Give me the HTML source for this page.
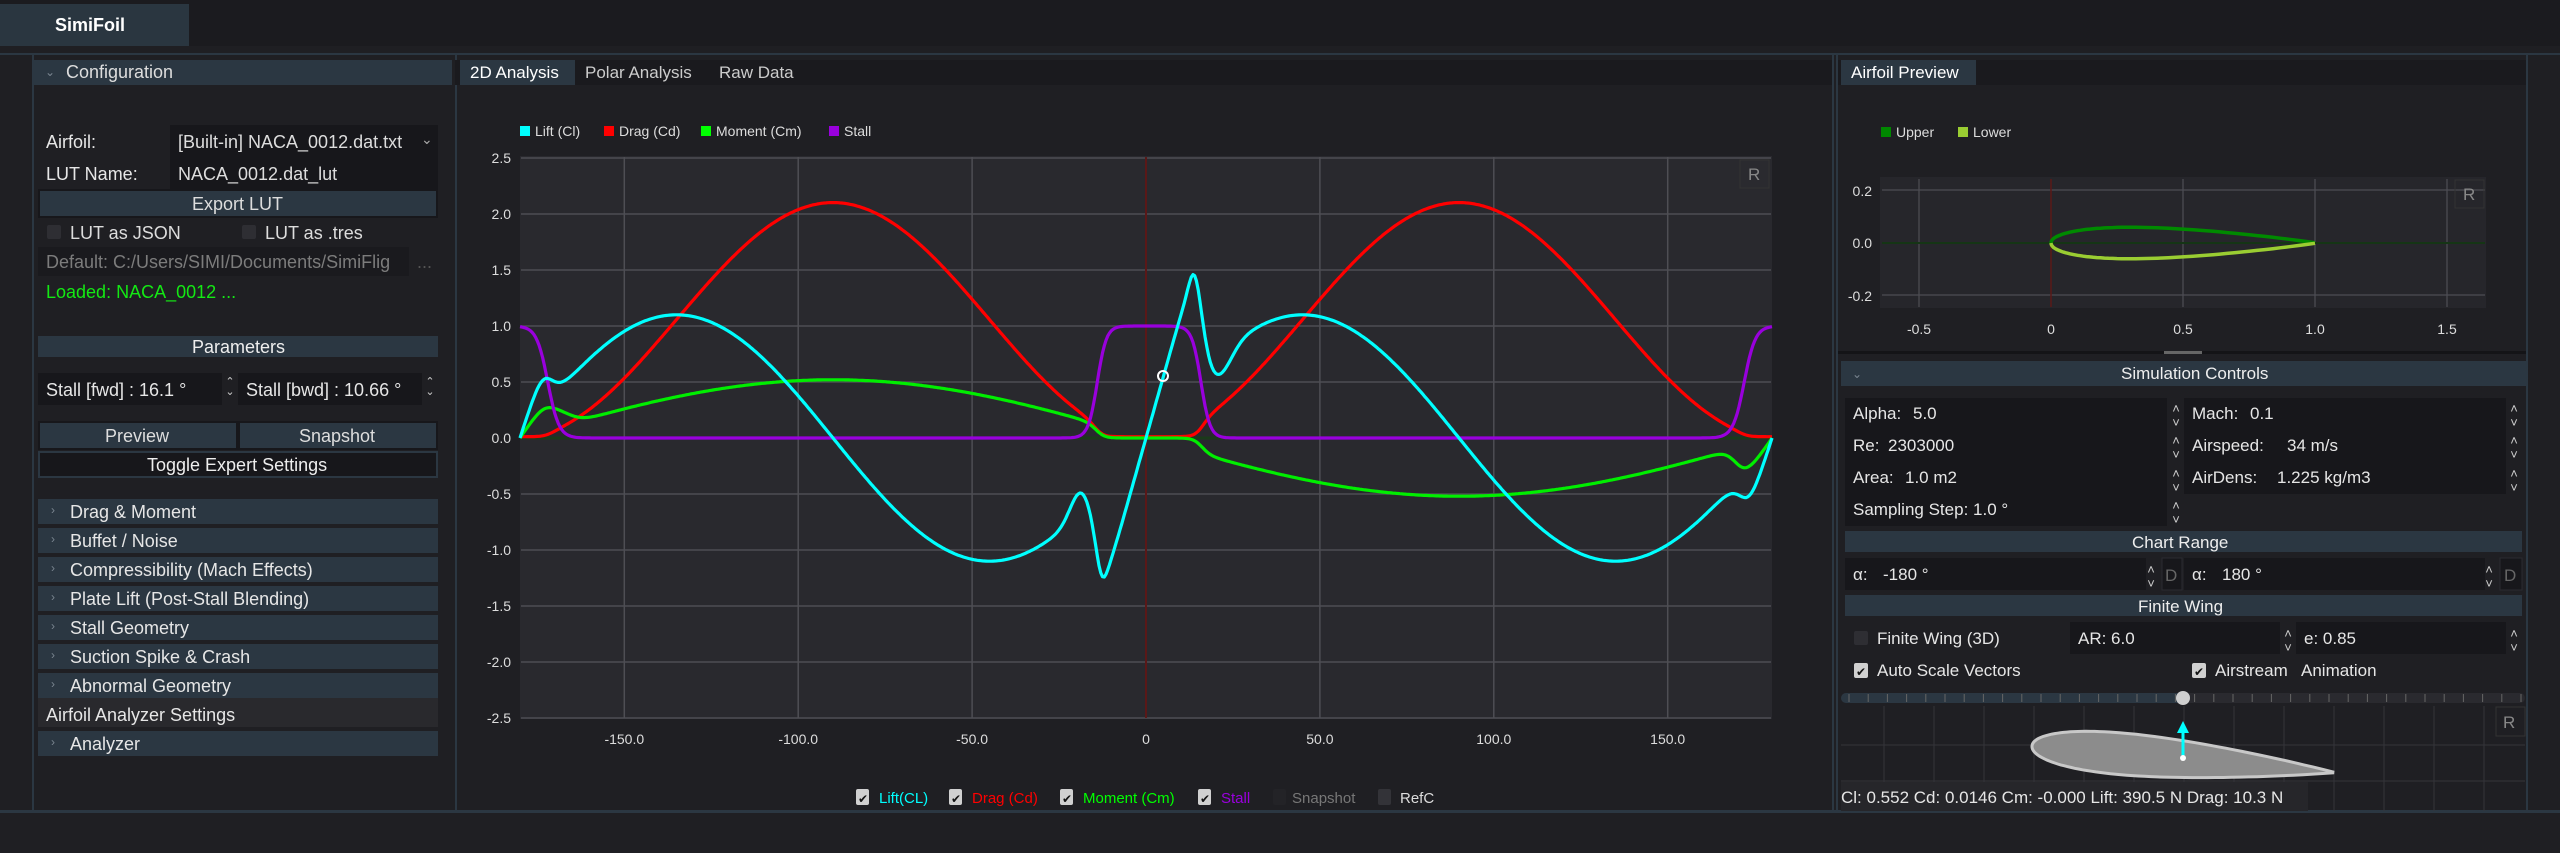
<!DOCTYPE html>
<html><head><meta charset="utf-8">
<style>
*{margin:0;padding:0;box-sizing:border-box}
body{width:2560px;height:853px;background:#1f1f23;font-family:"Liberation Sans",sans-serif;color:#e6e6e6;position:relative;overflow:hidden}
.a{position:absolute;white-space:nowrap}
.hdr{position:absolute;background:#2b3742}
.inp{position:absolute;background:#17171b}
.t{position:absolute;white-space:nowrap;font-size:18px;line-height:1}
.r{font-size:17px}
.chev{position:absolute;color:#7a8590;font-size:12px}
.cb{position:absolute;width:14px;height:14px;background:#2e2e33;border-radius:2px}
.spin{position:absolute;color:#ccc;font-size:11px;line-height:10px;text-align:center;width:12px}
svg text{white-space:pre}
</style></head><body>
<div class="a" style="left:0;top:0;width:2560px;height:46px;background:#1b1b1f"></div>
<div class="a" style="left:0;top:4px;width:189px;height:42px;background:#2a3640"></div>
<div class="t" style="left:55px;top:16px;font-weight:bold;font-size:18px;color:#fff">SimiFoil</div>
<div class="a" style="left:0;top:53px;width:2560px;height:2px;background:#2b3742"></div>
<div class="a" style="left:0;top:810px;width:2560px;height:3px;background:#2b3742"></div>

<div class="a" style="left:32px;top:55px;width:2px;height:756px;background:#2b3742"></div>
<div class="a" style="left:455px;top:55px;width:2px;height:756px;background:#2b3742"></div>
<div class="hdr" style="left:34px;top:60px;width:418px;height:25px"></div>
<div class="chev" style="left:45px;top:65px">&#8964;</div>
<div class="t" style="left:66px;top:63px;color:#ddd">Configuration</div>
<div class="t" style="left:46px;top:133px">Airfoil:</div>
<div class="t" style="left:46px;top:165px">LUT Name:</div>
<div class="inp" style="left:170px;top:125px;width:268px;height:64px"></div>
<div class="t" style="left:178px;top:133px;color:#ddd">[Built-in] NACA_0012.dat.txt</div>
<div class="a" style="left:421px;top:131px;color:#aaa;font-size:14px">&#8964;</div>
<div class="t" style="left:178px;top:165px;color:#ddd">NACA_0012.dat_lut</div>
<div class="a" style="left:38px;top:189px;width:400px;height:29px;background:#17171b"></div>
<div class="hdr" style="left:40px;top:191px;width:396px;height:25px"></div>
<div class="t" style="left:192px;top:195px;color:#ddd">Export LUT</div>
<div class="cb" style="left:47px;top:225px"></div>
<div class="t" style="left:70px;top:224px;color:#ddd">LUT as JSON</div>
<div class="cb" style="left:242px;top:225px"></div>
<div class="t" style="left:265px;top:224px;color:#ddd">LUT as .tres</div>
<div class="inp" style="left:38px;top:247px;width:371px;height:29px;background:#1a1a1e"></div>
<div class="t" style="left:46px;top:253px;color:#7c7c7c">Default: C:/Users/SIMI/Documents/SimiFlig</div>
<div class="t" style="left:417px;top:253px;color:#555">...</div>
<div class="t" style="left:46px;top:283px;color:#14e814">Loaded: NACA_0012 ...</div>
<div class="hdr" style="left:38px;top:336px;width:400px;height:21px"></div>
<div class="t" style="left:192px;top:338px;color:#eee">Parameters</div>
<div class="inp" style="left:38px;top:373px;width:184px;height:32px"></div>
<div class="t" style="left:46px;top:381px">Stall [fwd] : 16.1 °</div>
<div class="spin" style="left:224px;top:377px">&#8963;<br>&#8964;</div>
<div class="inp" style="left:238px;top:373px;width:184px;height:32px"></div>
<div class="t" style="left:246px;top:381px">Stall [bwd] : 10.66 °</div>
<div class="spin" style="left:424px;top:377px">&#8963;<br>&#8964;</div>
<div class="a" style="left:38px;top:421px;width:400px;height:29px;background:#17171b"></div>
<div class="hdr" style="left:40px;top:423px;width:196px;height:25px"></div>
<div class="hdr" style="left:240px;top:423px;width:196px;height:25px"></div>
<div class="t" style="left:105px;top:427px;color:#ddd">Preview</div>
<div class="t" style="left:299px;top:427px;color:#ddd">Snapshot</div>
<div class="a" style="left:38px;top:451px;width:400px;height:27px;background:#17171b;border:2px solid #2b3742"></div>
<div class="t" style="left:147px;top:456px;color:#eee">Toggle Expert Settings</div>

<div class="hdr" style="left:38px;top:499px;width:400px;height:25px"></div><div class="chev" style="left:51px;top:503px">&#8250;</div><div class="t" style="left:70px;top:503px">Drag &amp; Moment</div>
<div class="hdr" style="left:38px;top:528px;width:400px;height:25px"></div><div class="chev" style="left:51px;top:532px">&#8250;</div><div class="t" style="left:70px;top:532px">Buffet / Noise</div>
<div class="hdr" style="left:38px;top:557px;width:400px;height:25px"></div><div class="chev" style="left:51px;top:561px">&#8250;</div><div class="t" style="left:70px;top:561px">Compressibility (Mach Effects)</div>
<div class="hdr" style="left:38px;top:586px;width:400px;height:25px"></div><div class="chev" style="left:51px;top:590px">&#8250;</div><div class="t" style="left:70px;top:590px">Plate Lift (Post-Stall Blending)</div>
<div class="hdr" style="left:38px;top:615px;width:400px;height:25px"></div><div class="chev" style="left:51px;top:619px">&#8250;</div><div class="t" style="left:70px;top:619px">Stall Geometry</div>
<div class="hdr" style="left:38px;top:644px;width:400px;height:25px"></div><div class="chev" style="left:51px;top:648px">&#8250;</div><div class="t" style="left:70px;top:648px">Suction Spike &amp; Crash</div>
<div class="hdr" style="left:38px;top:673px;width:400px;height:25px"></div><div class="chev" style="left:51px;top:677px">&#8250;</div><div class="t" style="left:70px;top:677px">Abnormal Geometry</div>
<div class="a" style="left:38px;top:698px;width:400px;height:29px;background:#29292d"></div><div class="t" style="left:46px;top:706px">Airfoil Analyzer Settings</div>
<div class="hdr" style="left:38px;top:731px;width:400px;height:25px"></div><div class="chev" style="left:51px;top:735px">&#8250;</div><div class="t" style="left:70px;top:735px">Analyzer</div>

<div class="a" style="left:455px;top:60px;width:1377px;height:25px;background:#1a1a1e"></div>
<div class="a" style="left:460px;top:60px;width:115px;height:25px;background:#2b3742"></div>
<div class="t r" style="left:470px;top:64px;color:#fff">2D Analysis</div>
<div class="t r" style="left:585px;top:64px;color:#ccc">Polar Analysis</div>
<div class="t r" style="left:719px;top:64px;color:#ccc">Raw Data</div>
<div class="a" style="left:1832px;top:55px;width:2px;height:756px;background:#2b3742"></div>
<svg class="a" style="left:0;top:0" width="2560" height="853" id="sv">
<g font-family="Liberation Sans, sans-serif" font-size="14" fill="#ddd">
<rect x="520" y="126" width="10" height="10" fill="#00ffff"/><text x="535" y="136">Lift (Cl)</text>
<rect x="604" y="126" width="10" height="10" fill="#ff0000"/><text x="619" y="136">Drag (Cd)</text>
<rect x="701" y="126" width="10" height="10" fill="#00ff00"/><text x="716" y="136">Moment (Cm)</text>
<rect x="829" y="126" width="10" height="10" fill="#9900dd"/><text x="844" y="136">Stall</text>
</g>
<rect x="520" y="156" width="1252" height="563" fill="#29292e"/>
<g id="grid" stroke="#4e4e54" stroke-width="1.5"></g>
<line x1="1146" y1="157" x2="1146" y2="718" stroke="#5a1818" stroke-width="2"/>
<line x1="520" y1="438" x2="1772" y2="438" stroke="#1b3a1b" stroke-width="3"/>
<g id="ylab" font-family="Liberation Sans, sans-serif" font-size="14" fill="#ddd" text-anchor="end"></g>
<g id="curves" fill="none" stroke-width="3.2" stroke-linejoin="round"></g>
<circle cx="1163" cy="376" r="5" fill="none" stroke="#fff" stroke-width="2"/>
<rect x="1740" y="160" width="29" height="28" fill="#2a2a2f" stroke="#333" />
<text x="1748" y="180" font-family="Liberation Sans, sans-serif" font-size="17" fill="#888">R</text>
<g font-family="Liberation Sans, sans-serif" font-size="15">
<rect x="856" y="789" width="13" height="16" rx="2" fill="#d0d0d0"/><text x="858" y="803" font-size="12" fill="#111">✔</text><text x="879" y="803" fill="#00ffff">Lift(CL)</text>
<rect x="949" y="789" width="13" height="16" rx="2" fill="#d0d0d0"/><text x="951" y="803" font-size="12" fill="#111">✔</text><text x="972" y="803" fill="#ff0000">Drag (Cd)</text>
<rect x="1060" y="789" width="13" height="16" rx="2" fill="#d0d0d0"/><text x="1062" y="803" font-size="12" fill="#111">✔</text><text x="1083" y="803" fill="#00ff00">Moment (Cm)</text>
<rect x="1198" y="789" width="13" height="16" rx="2" fill="#d0d0d0"/><text x="1200" y="803" font-size="12" fill="#111">✔</text><text x="1221" y="803" fill="#9900dd">Stall</text>
<rect x="1273" y="789" width="13" height="16" rx="2" fill="#232327"/><text x="1292" y="803" fill="#777">Snapshot</text>
<rect x="1378" y="789" width="13" height="16" rx="2" fill="#333338"/><text x="1400" y="803" fill="#ddd">RefC</text>
</g>

<rect x="1836" y="55" width="2" height="756" fill="#2b3742"/>
<rect x="1838" y="60" width="690" height="25" fill="#1a1a1e"/>
<rect x="1841" y="60" width="135" height="25" fill="#2b3742"/>
<text x="1851" y="78" font-family="Liberation Sans, sans-serif" font-size="17" fill="#fff">Airfoil Preview</text>
<rect x="2526" y="55" width="2" height="756" fill="#2b3742"/>
<g font-family="Liberation Sans, sans-serif" font-size="14" fill="#ddd">
<rect x="1881" y="127" width="10" height="10" fill="#008800"/><text x="1896" y="137">Upper</text>
<rect x="1958" y="127" width="10" height="10" fill="#9acd32"/><text x="1973" y="137">Lower</text>
</g>
<rect x="1880" y="177" width="606" height="131" fill="#26262b"/>
<g stroke="#4e4e54" stroke-width="1.2">
<line x1="1882" y1="190" x2="2485" y2="190"/><line x1="1882" y1="295" x2="2485" y2="295"/>
<line x1="1919" y1="179" x2="1919" y2="307"/><line x1="2183" y1="179" x2="2183" y2="307"/><line x1="2315" y1="179" x2="2315" y2="307"/><line x1="2447" y1="179" x2="2447" y2="307"/>
</g>
<line x1="1882" y1="243" x2="2485" y2="243" stroke="#153515" stroke-width="2"/>
<line x1="2051" y1="179" x2="2051" y2="307" stroke="#5a1818" stroke-width="1.5"/>
<path id="up" fill="none" stroke="#008a00" stroke-width="3.5"/>
<path id="lo" fill="none" stroke="#9acd32" stroke-width="3.5"/>
<rect x="2455" y="180" width="29" height="28" fill="none" stroke="#333"/>
<text x="2463" y="200" font-family="Liberation Sans, sans-serif" font-size="17" fill="#888">R</text>
<g font-family="Liberation Sans, sans-serif" font-size="14" fill="#ddd">
<text x="1872" y="196" text-anchor="end">0.2</text><text x="1872" y="248" text-anchor="end">0.0</text><text x="1872" y="301" text-anchor="end">-0.2</text>
<g text-anchor="middle"><text x="1919" y="334">-0.5</text><text x="2051" y="334">0</text><text x="2183" y="334">0.5</text><text x="2315" y="334">1.0</text><text x="2447" y="334">1.5</text></g>
</g>
<rect x="1838" y="351" width="688" height="3" fill="#141417"/>
<rect x="2164" y="351" width="38" height="3" fill="#666"/>
<rect x="1841" y="361" width="685" height="25" fill="#2b3742"/>
<text x="1852" y="378" font-family="Liberation Sans, sans-serif" font-size="12" fill="#7a8590">&#8964;</text>
<text x="2121" y="379" font-family="Liberation Sans, sans-serif" font-size="17" fill="#eee">Simulation Controls</text>
<rect x="1845" y="398" width="322" height="128" fill="#17171b"/>
<rect x="2184" y="398" width="322" height="96" fill="#17171b"/>
<g font-family="Liberation Sans, sans-serif" font-size="17" fill="#e6e6e6">
<text x="1853" y="419">Alpha:</text><text x="1913" y="419">5.0</text>
<text x="1853" y="451">Re:</text><text x="1888" y="451">2303000</text>
<text x="1853" y="483">Area:</text><text x="1905" y="483">1.0 m2</text>
<text x="1853" y="515">Sampling Step: 1.0 °</text>
<text x="2192" y="419">Mach:</text><text x="2250" y="419">0.1</text>
<text x="2192" y="451">Airspeed:</text><text x="2287" y="451">34 m/s</text>
<text x="2192" y="483">AirDens:</text><text x="2277" y="483">1.225 kg/m3</text>
</g>
<g id="spins" font-family="Liberation Sans, sans-serif" font-size="13" fill="#ccc" text-anchor="middle"></g>
<rect x="1845" y="531" width="677" height="21" fill="#2b3742"/>
<text x="2132" y="548" font-family="Liberation Sans, sans-serif" font-size="17" fill="#eee">Chart Range</text>
<rect x="1845" y="558" width="301" height="32" fill="#17171b"/>
<rect x="2162" y="558" width="20" height="32" fill="#17171b" stroke="#2b2b30"/>
<rect x="2184" y="558" width="301" height="32" fill="#17171b"/>
<rect x="2500" y="558" width="22" height="32" fill="#17171b" stroke="#2b2b30"/>
<g font-family="Liberation Sans, sans-serif" font-size="17" fill="#e6e6e6">
<text x="1853" y="580">α:</text><text x="1883" y="580">-180 °</text><text x="2192" y="580">α:</text><text x="2222" y="580">180 °</text>
<text x="2165" y="581" fill="#666">D</text><text x="2504" y="581" fill="#666">D</text>
</g>
<rect x="1845" y="595" width="677" height="21" fill="#2b3742"/>
<text x="2138" y="612" font-family="Liberation Sans, sans-serif" font-size="17" fill="#eee">Finite Wing</text>
<rect x="1854" y="631" width="14" height="14" rx="2" fill="#2e2e33"/>
<rect x="2070" y="622" width="210" height="32" fill="#17171b"/>
<rect x="2296" y="622" width="210" height="32" fill="#17171b"/>
<g font-family="Liberation Sans, sans-serif" font-size="17" fill="#e6e6e6">
<text x="1877" y="644">Finite Wing (3D)</text>
<text x="2078" y="644">AR: 6.0</text><text x="2304" y="644">e: 0.85</text>
<text x="1877" y="676">Auto Scale Vectors</text>
<text x="2215" y="676">Airstream</text><text x="2301" y="676">Animation</text>
</g>
<rect x="1854" y="663" width="14" height="15" rx="2" fill="#d0d0d0"/><text x="1856" y="676" font-size="12" fill="#111">✔</text>
<rect x="2192" y="663" width="14" height="15" rx="2" fill="#d0d0d0"/><text x="2194" y="676" font-size="12" fill="#111">✔</text>
<rect x="1841" y="693" width="684" height="10" rx="5" fill="#2a2a2f"/>
<rect x="1841" y="693" width="342" height="10" rx="5" fill="#2b3742"/>
<g id="ticks" stroke="#666" stroke-width="1"></g>
<circle cx="2183" cy="698" r="7" fill="#cfcfcf"/>
<g id="vgrid" stroke="#34343a" stroke-width="1"></g>
<path id="foil" fill="#8c8c8c" stroke="#c8c8c8" stroke-width="3"/>
<line x1="2183" y1="758" x2="2183" y2="730" stroke="#00ffff" stroke-width="3"/>
<polygon points="2183,721 2177,733 2189,733" fill="#00ffff"/>
<circle cx="2183" cy="758" r="3" fill="#fff"/>
<rect x="2496" y="707" width="29" height="29" fill="none" stroke="#333"/>
<text x="2503" y="728" font-family="Liberation Sans, sans-serif" font-size="17" fill="#888">R</text>
<rect x="1841" y="782" width="467" height="29" fill="#26262a"/>
<text x="1841" y="803" font-family="Liberation Sans, sans-serif" font-size="17" fill="#e6e6e6">Cl: 0.552 Cd: 0.0146 Cm: -0.000 Lift: 390.5 N Drag: 10.3 N</text>
</svg>
<script>
var NS="http://www.w3.org/2000/svg";
function el(p,t,a){var e=document.createElementNS(NS,t);for(var k in a)e.setAttribute(k,a[k]);document.getElementById(p).appendChild(e);return e;}
var px=function(a){return 1146+a*3.478}, py=function(v){return 438-v*112};
for(var v=-2.5;v<=2.51;v+=0.5){ if(Math.abs(v)>0.01) el("grid","line",{x1:521,x2:1771,y1:py(v),y2:py(v)});
 var t=el("ylab","text",{x:511,y:py(v)+5});t.textContent=v.toFixed(1);}
[-150,-100,-50,50,100,150].forEach(function(a){el("grid","line",{x1:px(a),x2:px(a),y1:157,y2:718});});
[-150,-100,-50,0,50,100,150].forEach(function(a){var t=el("ylab","text",{x:px(a),y:744,"text-anchor":"middle"});t.textContent=a==0?"0":a.toFixed(1);});
function sg(x){return 1/(1+Math.exp(-x));}
function g(a,c,w){return Math.exp(-Math.pow((a-c)/w,2));}
function stall(a){var A=Math.abs(a);var f=a>=0?sg((15.8-a)/1.3):sg((a+14)/1.3);return Math.min(1,f+sg((A-172)/1.6));}
var R=Math.PI/180;
function cl(a){var s=stall(a),A=Math.abs(a);
 var att;
 if(A<90){att=0.11*a+0.15*g(a,14,2)-0.12*g(a,-13,2);}
 else{att=a<0?0.095*(a+180):0.095*(a-180);}
 var plate=1.1*Math.sin(2*a*R);
 plate-=0.2*g(a,21,5);
 plate+=0.22*g(a,-19,4);
 return s*att+(1-s)*plate;}
function cd(a){var s=stall(a);return 0.012+(1-s)*2.09*Math.pow(Math.sin(a*R),2);}
function cm(a){var s=stall(a);var att=0;
 if(Math.abs(a)>90)att=a<0?0.045*(a+180):0.045*(a-180);
 var plate=-0.52*Math.sin(a*R)+0.12*g(a,-170,6)-0.1*g(a,172,4);
 var extra=-0.08*sg((a-16)/1.5)*g(a,20,20)*0;
 return s*att+(1-s)*plate;}
function path(f){var d="";for(var a=-180;a<=180;a+=0.5){d+=(a==-180?"M":"L")+px(a).toFixed(1)+","+py(f(a)).toFixed(1);}return d;}
el("curves","path",{d:path(cd),stroke:"#ff0000"});
el("curves","path",{d:path(cm),stroke:"#00ee00"});
el("curves","path",{d:path(stall),stroke:"#9900dd"});
el("curves","path",{d:path(cl),stroke:"#00ffff"});
function yt(x){return 0.6*(0.2969*Math.sqrt(x)-0.126*x-0.3516*x*x+0.2843*x*x*x-0.1015*x*x*x*x);}
var u="",l="";for(var i=0;i<=60;i++){var x=Math.pow(i/60,2);var X=2051+x*264,Y=yt(x)*262;u+=(i?"L":"M")+X.toFixed(1)+","+(243-Y).toFixed(1);l+=(i?"L":"M")+X.toFixed(1)+","+(243+Y).toFixed(1);}
document.getElementById("up").setAttribute("d",u);document.getElementById("lo").setAttribute("d",l);
var c=Math.cos(5*R),s5=Math.sin(5*R),d="",pts=[];
for(var i=0;i<=60;i++){var x=Math.pow(i/60,2);pts.push([x,yt(x)]);}
var all=pts.map(function(p){return [p[0],p[1]*1.15]}).reverse().concat(pts.map(function(p){return [p[0],-p[1]*1.15]}));
all.forEach(function(p,i){var X=p[0]*302,Y=-p[1]*302;var xr=X*c-Y*s5,yr=X*s5+Y*c;d+=(i?"L":"M")+(2032+xr).toFixed(1)+","+(746+yr).toFixed(1);});
document.getElementById("foil").setAttribute("d",d+"Z");
for(var x=1884;x<2526;x+=50){el("vgrid","line",{x1:x,x2:x,y1:706,y2:811});}
[745,781].forEach(function(y){el("vgrid","line",{x1:1841,x2:2525,y1:y,y2:y});});
for(var x=1849;x<2525;x+=19.2){el("ticks","line",{x1:x,x2:x,y1:694,y2:702});}
[[2176,413],[2176,445],[2176,478],[2176,510],[2514,413],[2514,445],[2514,478],[2151,574],[2489,574],[2288,638],[2514,638]].forEach(function(p){
 var t=el("spins","text",{x:p[0],y:p[1]});t.textContent="\u02C4";var b=el("spins","text",{x:p[0],y:p[1]+14});b.textContent="\u02C5";});
</script>
</body></html>
